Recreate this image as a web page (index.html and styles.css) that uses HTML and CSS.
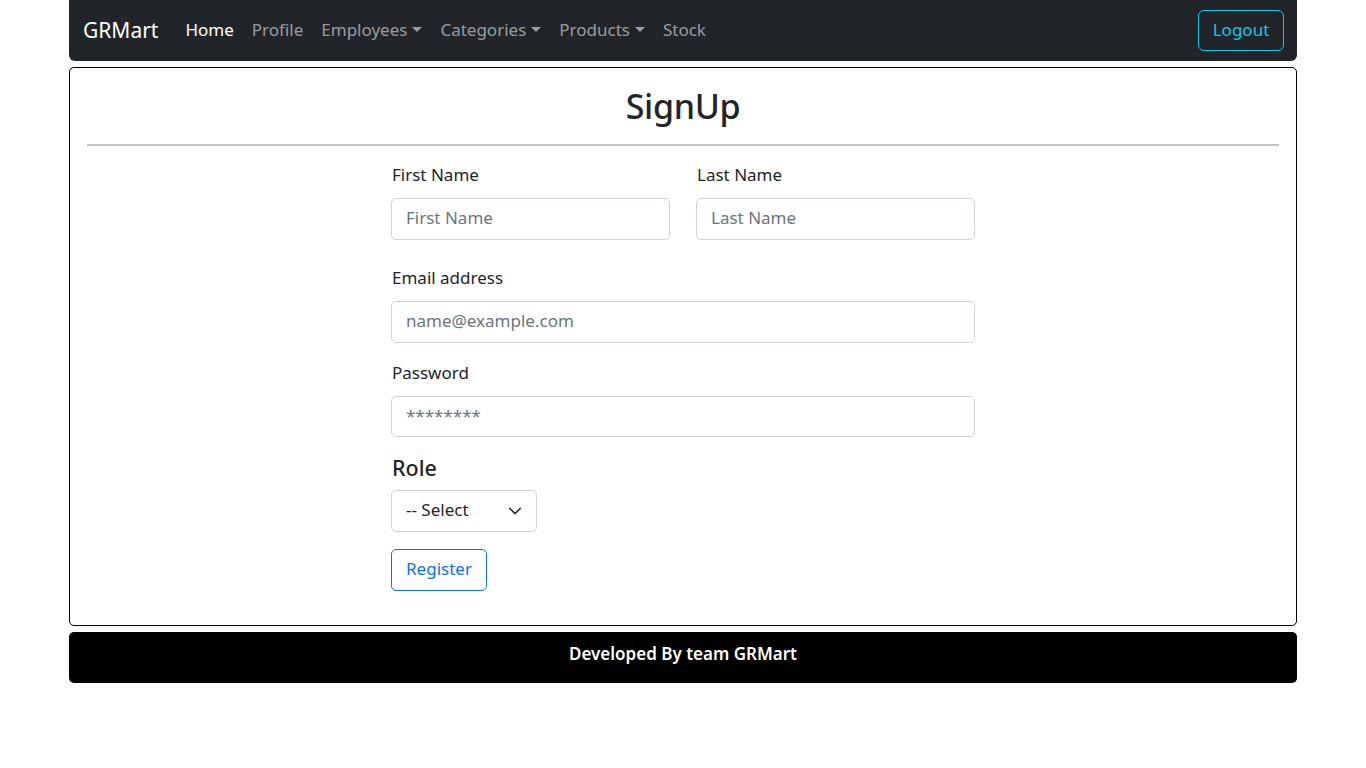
FILE: index.html
```html
<!DOCTYPE html>
<html lang="en">
<head>
<meta charset="utf-8">
<title>GRMart - SignUp</title>
<link rel="stylesheet" href="styles.css">
</head>
<body>
<div class="page">
  <nav class="navbar">
    <a class="brand" href="#">GRMart</a>
    <ul class="nav">
      <li><a class="nav-link active" href="#">Home</a></li>
      <li><a class="nav-link" href="#">Profile</a></li>
      <li><a class="nav-link toggle" href="#">Employees</a></li>
      <li><a class="nav-link toggle" href="#">Categories</a></li>
      <li><a class="nav-link toggle" href="#">Products</a></li>
      <li><a class="nav-link" href="#">Stock</a></li>
    </ul>
    <button class="btn-logout" type="button">Logout</button>
  </nav>

  <main class="card">
    <h2 class="title">SignUp</h2>
    <hr class="divider">
    <form class="form">
      <div class="name-row">
        <div class="field">
          <label class="label">First Name</label>
          <input class="control" type="text" placeholder="First Name">
        </div>
        <div class="field">
          <label class="label">Last Name</label>
          <input class="control" type="text" placeholder="Last Name">
        </div>
      </div>
      <div class="field field-email">
        <label class="label">Email address</label>
        <input class="control" type="email" placeholder="name@example.com">
      </div>
      <div class="field field-pass">
        <label class="label">Password</label>
        <input class="control" type="password" placeholder="********">
      </div>
      <h5 class="role">Role</h5>
      <div class="select">
        <span>-- Select</span>
        <svg class="chev" width="16" height="16" viewBox="0 0 16 16"><path d="M2 5l6 6 6-6" fill="none" stroke="#343a40" stroke-width="2" stroke-linecap="round" stroke-linejoin="round"/></svg>
      </div>
      <button class="btn-register" type="button">Register</button>
    </form>
  </main>

  <footer class="footer">Developed By team GRMart</footer>
</div>
</body>
</html>
```

FILE: styles.css
```css
* { box-sizing: border-box; }
html, body { margin: 0; padding: 0; }
body {
  font-family: "Noto Sans", "Open Sans", sans-serif;
  font-size: 17px;
  line-height: 24px;
  color: #212529;
  background: #fff;
}
.page {
  width: 1228px;
  margin: 0 auto;
}
.navbar {
  height: 61px;
  background: #212529;
  border-radius: 0 0 6px 6px;
  display: flex;
  align-items: center;
  padding: 0 13px 0 14px;
}
.brand {
  color: #fff;
  text-decoration: none;
  font-size: 21px;
  line-height: 30px;
  margin-right: 18px;
  padding-bottom: 2px;
}
.nav {
  list-style: none;
  margin: 0;
  padding: 0;
  display: flex;
  flex: 1;
}
.nav-link {
  display: block;
  padding: 7px 9px 9px;
  color: rgba(255,255,255,0.55);
  text-decoration: none;
  font-size: 17px;
}
.nav-link.active { color: #fff; }
.toggle::after {
  content: "";
  display: inline-block;
  margin-left: 5px;
  vertical-align: 4px;
  border-top: 5px solid;
  border-left: 5px solid transparent;
  border-right: 5px solid transparent;
}
.btn-logout {
  font-family: inherit;
  font-size: 17px;
  color: #0dcaf0;
  background: transparent;
  border: 1px solid #0dcaf0;
  border-radius: 6px;
  height: 41px;
  width: 86px;
  padding: 0 0 2px;
}
.card {
  margin-top: 6px;
  border: 1px solid #000;
  border-radius: 5px;
  padding: 16px 17px 34px;
  height: 559px;
}
.title {
  margin: 0;
  text-align: center;
  font-size: 34px;
  line-height: 44px;
  font-weight: 500;
  letter-spacing: -0.3px;
}
.divider {
  margin: 16px 0 0;
  border: 0;
  border-top: 2px solid #c4c4c4;
}
.form {
  width: 584px;
  margin: 0 auto;
  padding-top: 17px;
  display: flex;
  flex-direction: column;
  align-items: flex-start;
}
.name-row {
  display: grid;
  grid-template-columns: 279px 279px;
  column-gap: 26px;
  width: 584px;
}
.field {
  display: flex;
  flex-direction: column;
  width: 100%;
}
.label {
  line-height: 24px;
  margin-bottom: 11px;
  padding-left: 1px;
}
.control {
  height: 42px;
  width: 100%;
  font-family: inherit;
  font-size: 17px;
  padding: 0 14px 3px;
  border: 1px solid #ced4da;
  border-radius: 5px;
  color: #212529;
}
.control::placeholder { color: #6c757d; opacity: 1; }
.field-email { margin-top: 26px; }
.field-pass { margin-top: 18px; }
.field-pass .control { height: 41px; }
.role {
  margin: 19px 0 10px;
  font-size: 21.5px;
  line-height: 24px;
  font-weight: 500;
  padding-left: 1px;
}
.select {
  width: 146px;
  height: 42px;
  border: 1px solid #ced4da;
  border-radius: 5px;
  display: flex;
  align-items: center;
  justify-content: space-between;
  padding: 0 14px 2px 14px;
}
.chev { width: 14px; height: 14px; margin-top: 2px; }
.btn-register {
  margin-top: 17px;
  height: 42px;
  width: 96px;
  padding: 0 0 3px;
  font-family: inherit;
  font-size: 17px;
  color: #0d6efd;
  background: #fff;
  border: 1px solid #0d6efd;
  border-radius: 5px;
}
.footer {
  margin-top: 6px;
  height: 51px;
  background: #000;
  color: #fff;
  border-radius: 5px;
  display: flex;
  align-items: center;
  justify-content: center;
  font-weight: 600;
  font-size: 17px;
  padding-bottom: 8px;
}
```
